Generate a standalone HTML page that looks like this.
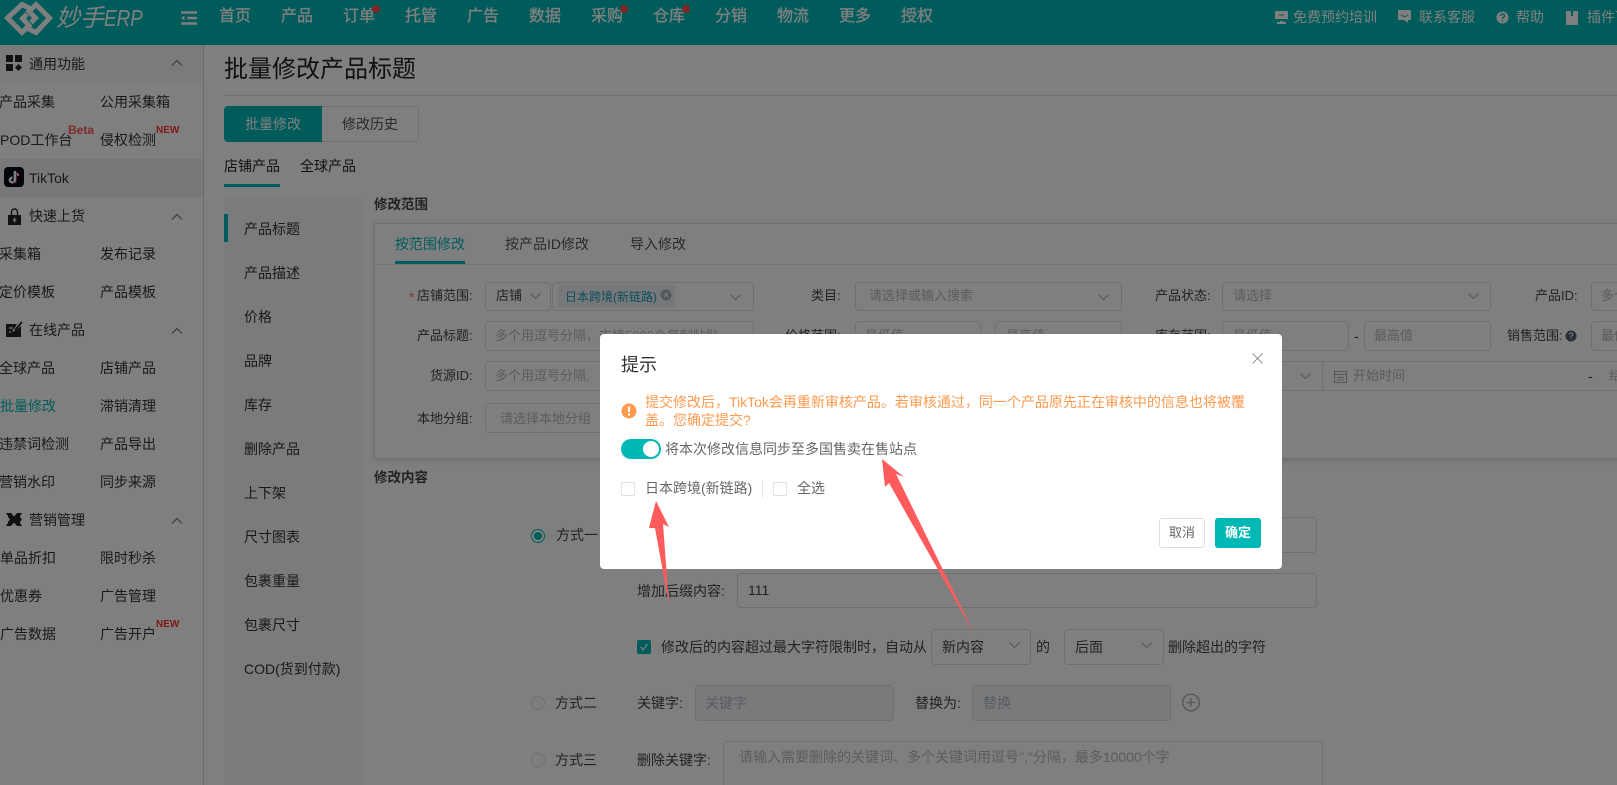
<!DOCTYPE html>
<html lang="zh"><head><meta charset="utf-8"><title>批量修改产品标题</title>
<style>
*{box-sizing:border-box}
html,body{margin:0;padding:0;width:1617px;height:785px;overflow:hidden;background:#fff;font-family:"Liberation Sans","Noto Sans CJK SC",sans-serif;font-size:14px;color:#333}
#root{position:relative;width:1617px;height:785px;overflow:hidden}
.a,.t,.b{position:absolute}
.t{line-height:20px;height:20px;white-space:nowrap}
.b{border:1px solid #dcdfe6;border-radius:4px;background:#fff}
.n{color:#fff;font-size:16px;top:7px;-webkit-text-stroke:.3px #fff}
.r{color:#fff;top:7px;font-size:14px}
.dot{position:absolute;width:8px;height:8px;border-radius:50%;background:#ff4d4f;top:5px}
.ph{color:#b4b8bf}
.f{font-size:13px}
.lab{color:#444}
.side{color:#333}
svg{position:absolute;overflow:visible}
#ov{position:absolute;left:0;top:0;width:1617px;height:785px;background:rgba(0,0,0,.5)}
#dlg{position:absolute;left:600px;top:334px;width:682px;height:235px;background:#fff;border-radius:4px}
#dlg .t{color:#666}
.cb{position:absolute;width:14px;height:14px;border:1px solid #dcdfe6;border-radius:2px;background:#fff}
</style></head><body><div id="root">
<div class="a" style="left:0;top:0;width:1617px;height:45px;background:#00b8b6"></div>
<svg style="left:0;top:0" width="60" height="45" viewBox="0 0 60 45"><g fill="none" stroke="#fff" stroke-width="5" stroke-linejoin="miter"><path d="M31 9L22 4.500L7.500 18L22 32.500L29 25.500L22.500 18.500L27 14"/><path d="M25 27L36 32.500L49.500 18L36 4.500L29 11.500L35.500 18L31 22.500"/></g></svg>
<div class="t" style="left:56px;top:4px;height:28px;line-height:28px;font-size:24px;font-style:italic;color:#fff">妙手<span style="display:inline-block;font-size:23px;transform:scaleX(.82);transform-origin:left">ERP</span></div>
<svg style="left:181px;top:11px" width="16" height="14"><path d="M0 1.500H16M6 7H16M0 12.500H16" stroke="#fff" stroke-width="2.400"/><path d="M0 7L3.500 4.500V9.500Z" fill="#fff"/></svg>
<div class="t n" style="left:219px">首页</div><div class="t n" style="left:281px">产品</div><div class="t n" style="left:343px">订单</div><div class="dot" style="left:372px"></div>
<div class="t n" style="left:405px">托管</div><div class="t n" style="left:467px">广告</div><div class="t n" style="left:529px">数据</div><div class="t n" style="left:591px">采购</div><div class="dot" style="left:620px"></div>
<div class="t n" style="left:653px">仓库</div><div class="dot" style="left:682px"></div><div class="t n" style="left:715px">分销</div><div class="t n" style="left:777px">物流</div><div class="t n" style="left:839px">更多</div><div class="t n" style="left:901px">授权</div>
<svg style="left:1275px;top:11px" width="14" height="14"><path d="M0 0H13V8H0Z M5 10H8V11H11V13H2V11H5Z" fill="#fff"/><path d="M4 4H9" stroke="#00b8b6"/></svg>
<div class="t r" style="left:1293px">免费预约培训</div>
<svg style="left:1397px;top:10px" width="15" height="15"><path d="M1 0H14V10H11V13L7 10H1Z" fill="#fff"/><path d="M4 5Q7.500 8 11 5" stroke="#00b8b6" fill="none"/></svg>
<div class="t r" style="left:1419px">联系客服</div>
<svg style="left:1496px;top:11px" width="13" height="13"><circle cx="6.500" cy="6.500" r="6" fill="#fff"/><path d="M4.500 5Q5 3 6.500 3Q8.500 3 8.500 5Q8.500 6 6.500 7V8M6.500 9.300V10.500" stroke="#00b8b6" fill="none" stroke-width="1.300"/></svg>
<div class="t r" style="left:1516px">帮助</div>
<svg style="left:1566px;top:11px" width="12" height="14"><path d="M0 0H12V14H0Z" fill="#fff"/><path d="M5 0V5H7V0" fill="#00b8b6"/></svg>
<div class="t r" style="left:1587px">插件下载</div>

<!-- sidebar -->
<div class="a" style="left:0;top:45px;width:204px;height:740px;background:#fff;border-right:1px solid #d4d6d9"></div>
<div class="a" style="left:0;top:45px;width:203px;height:38px;background:#f6f7f8"></div>
<div class="a" style="left:0;top:159px;width:203px;height:38px;background:#eef0f3"></div>
<svg style="left:6px;top:55px" width="17" height="17"><path d="M0 0H7V7H0ZM9 0H16V7H9ZM0 9H7V16H0Z" fill="#222"/><path d="M12.500 9L16 12.500L12.500 16L9 12.500Z" fill="#222"/></svg>
<div class="t side" style="left:29px;top:54px">通用功能</div>
<div class="t side" style="left:-1px;top:92px">产品采集</div><div class="t side" style="left:100px;top:92px">公用采集箱</div>
<div class="t side" style="left:0;top:130px">POD工作台</div><div class="t side" style="left:100px;top:130px">侵权检测</div>
<div class="t" style="left:68px;top:120px;font-size:12px;font-weight:bold;color:#f55">Beta</div>
<div class="t" style="left:156px;top:121px;font-size:10px;font-weight:bold;color:#f33">NEW</div>
<svg style="left:4px;top:167px" width="20" height="20"><rect width="20" height="20" rx="4" fill="#0c0c14"/><path d="M10 4.500V13A2.500 2.500 0 1 1 7.500 10.500" fill="none" stroke="#35d8dc" stroke-width="1"/><path d="M11 4V13A2.500 2.500 0 1 1 8.500 10.500" fill="none" stroke="#fff" stroke-width="2.200"/><path d="M11 4.500Q12 7.500 15 8" fill="none" stroke="#fff" stroke-width="2"/><path d="M12.500 5V13.500A2.500 2.500 0 0 1 9 15.800" fill="none" stroke="#e8355a" stroke-width=".8"/></svg>
<div class="t side" style="left:29px;top:168px">TikTok</div>
<svg style="left:7px;top:208px" width="15" height="17"><path d="M4.500 7V4A3 3 0 0 1 10.500 4V7" fill="none" stroke="#222" stroke-width="1.400"/><path d="M1 7H14V17H1Z" fill="#222"/><path d="M8.500 8.500L5.500 12.500H7.500L6.500 15.500L9.800 11.500H7.800Z" fill="#fff"/></svg>
<div class="t side" style="left:29px;top:206px">快速上货</div>
<div class="t side" style="left:-1px;top:244px">采集箱</div><div class="t side" style="left:100px;top:244px">发布记录</div>
<div class="t side" style="left:-1px;top:282px">定价模板</div><div class="t side" style="left:100px;top:282px">产品模板</div>
<svg style="left:6px;top:321px" width="17" height="17"><path d="M0 3H11L8 8H7L6.500 11L10 9L15 5V16H0Z" fill="#222"/><path d="M3 7H7M3 11H5" stroke="#fff" stroke-width="1.200"/><path d="M9 9L16 1" stroke="#222" stroke-width="1.800"/></svg>
<div class="t side" style="left:29px;top:320px">在线产品</div>
<div class="t side" style="left:-1px;top:358px">全球产品</div><div class="t side" style="left:100px;top:358px">店铺产品</div>
<div class="t" style="left:0;top:396px;color:#00b8b6">批量修改</div><div class="t side" style="left:100px;top:396px">滞销清理</div>
<div class="t side" style="left:-1px;top:434px">违禁词检测</div><div class="t side" style="left:100px;top:434px">产品导出</div>
<div class="t side" style="left:-1px;top:472px">营销水印</div><div class="t side" style="left:100px;top:472px">同步来源</div>
<svg style="left:6px;top:513px" width="17" height="13"><path d="M0 0H5L8 3.500L11 0H16L14 3V4L16 6.500L14 9V10L16 13H11L8 9.500L5 13H0L2 10V9L4 6.500L2 4V3Z" fill="#222"/></svg>
<div class="t side" style="left:29px;top:510px">营销管理</div>
<div class="t side" style="left:0;top:548px">单品折扣</div><div class="t side" style="left:100px;top:548px">限时秒杀</div>
<div class="t side" style="left:0;top:586px">优惠券</div><div class="t side" style="left:100px;top:586px">广告管理</div>
<div class="t side" style="left:0;top:624px">广告数据</div><div class="t side" style="left:100px;top:624px">广告开户</div>
<div class="t" style="left:156px;top:615px;font-size:10px;font-weight:bold;color:#f33">NEW</div>
<svg style="left:172px;top:60px" width="10" height="6"><path d="M0 5.500L5 .5L10 5.500" fill="none" stroke="#666"/></svg>
<svg style="left:172px;top:214px" width="10" height="6"><path d="M0 5.500L5 .5L10 5.500" fill="none" stroke="#666"/></svg>
<svg style="left:172px;top:328px" width="10" height="6"><path d="M0 5.500L5 .5L10 5.500" fill="none" stroke="#666"/></svg>
<svg style="left:172px;top:518px" width="10" height="6"><path d="M0 5.500L5 .5L10 5.500" fill="none" stroke="#666"/></svg>

<!-- main header -->
<div class="t" style="left:224px;top:55px;height:30px;line-height:30px;font-size:24px;color:#222">批量修改产品标题</div>
<div class="a" style="left:224px;top:95px;width:1393px;height:1px;background:#dfe1e4"></div>
<div class="a" style="left:224px;top:106px;width:195px;height:36px;border:1px solid #dcdfe6;border-radius:4px"></div>
<div class="a" style="left:224px;top:106px;width:98px;height:36px;background:#00b8b6;border-radius:4px 0 0 4px"></div>
<div class="t" style="left:245px;top:114px;color:#fff">批量修改</div>
<div class="t" style="left:342px;top:114px;color:#555">修改历史</div>
<div class="t" style="left:224px;top:156px;color:#222">店铺产品</div><div class="t" style="left:300px;top:156px;color:#222">全球产品</div>
<div class="a" style="left:224px;top:184px;width:56px;height:3px;background:#00b8b6"></div>

<!-- left panel -->
<div class="a" style="left:224px;top:197px;width:140px;height:588px;background:#f4f6f8;border-radius:4px 4px 0 0"></div>
<div class="a" style="left:224px;top:214px;width:4px;height:28px;background:#00b8b6"></div>
<div class="t" style="left:244px;top:219px">产品标题</div><div class="t" style="left:244px;top:263px">产品描述</div><div class="t" style="left:244px;top:307px">价格</div><div class="t" style="left:244px;top:351px">品牌</div><div class="t" style="left:244px;top:395px">库存</div><div class="t" style="left:244px;top:439px">删除产品</div><div class="t" style="left:244px;top:483px">上下架</div><div class="t" style="left:244px;top:527px">尺寸图表</div><div class="t" style="left:244px;top:571px">包裹重量</div><div class="t" style="left:244px;top:615px">包裹尺寸</div><div class="t" style="left:244px;top:659px">COD(货到付款)</div>

<!-- range card -->
<div class="t" style="left:374px;top:195px;font-weight:bold;color:#444;font-size:13.500px">修改范围</div>
<div class="a" style="left:374px;top:223px;width:1260px;height:236px;border:1px solid #dfe1e5;background:#fff;box-shadow:0 2px 6px rgba(0,0,0,.12)"></div>
<div class="a" style="left:375px;top:264px;width:1242px;height:1px;background:#e4e7ed"></div>
<div class="t" style="left:395px;top:234px;color:#00b8b6">按范围修改</div><div class="t" style="left:505px;top:234px;color:#555">按产品ID修改</div><div class="t" style="left:630px;top:234px;color:#555">导入修改</div>
<div class="a" style="left:395px;top:261px;width:70px;height:3px;background:#00b8b6"></div>

<div class="t" style="left:409px;top:287px;color:#f56c6c">*</div><div class="t lab f" style="left:417px;top:286px">店铺范围:</div>
<div class="b" style="left:485px;top:282px;width:66px;height:29px"></div><div class="t lab f" style="left:496px;top:286px">店铺</div>
<svg style="left:530px;top:293px" width="11" height="6"><path d="M.5 .5L5.500 5.500L10.500 .5" fill="none" stroke="#aaa"/></svg>
<div class="b" style="left:552px;top:282px;width:202px;height:29px"></div>
<div class="a" style="left:558px;top:285px;width:117px;height:23px;background:#ecf0f4;border-radius:3px"></div>
<div class="t" style="left:565px;top:287px;font-size:12px;color:#1a9ab4">日本跨境(新链路)</div>
<svg style="left:660px;top:289px" width="12" height="12"><circle cx="6" cy="6" r="5.500" fill="#a9afb8"/><path d="M4 4L8 8M8 4L4 8" stroke="#fff"/></svg>
<svg style="left:730px;top:294px" width="11" height="6"><path d="M.5 .5L5.500 5.500L10.500 .5" fill="none" stroke="#aaa"/></svg>
<div class="t lab f" style="left:811px;top:286px">类目:</div>
<div class="b" style="left:855px;top:282px;width:267px;height:29px"></div><div class="t ph f" style="left:869px;top:286px">请选择或输入搜索</div>
<svg style="left:1098px;top:294px" width="11" height="6"><path d="M.5 .5L5.500 5.500L10.500 .5" fill="none" stroke="#aaa"/></svg>
<div class="t lab f" style="left:1155px;top:286px">产品状态:</div>
<div class="b" style="left:1222px;top:282px;width:269px;height:29px"></div><div class="t ph f" style="left:1233px;top:286px">请选择</div>
<svg style="left:1468px;top:293px" width="11" height="6"><path d="M.5 .5L5.500 5.500L10.500 .5" fill="none" stroke="#aaa"/></svg>
<div class="t lab f" style="left:1535px;top:286px">产品ID:</div>
<div class="b" style="left:1591px;top:282px;width:60px;height:29px"></div><div class="t ph f" style="left:1601px;top:286px">多个</div>

<div class="t lab f" style="left:417px;top:326px">产品标题:</div>
<div class="b" style="left:485px;top:321px;width:269px;height:30px"></div><div class="t ph f" style="left:495px;top:326px">多个用逗号分隔，支持5000个复制粘贴</div>
<div class="t lab f" style="left:785px;top:326px">价格范围:</div>
<div class="b" style="left:855px;top:321px;width:126px;height:30px"></div><div class="t ph f" style="left:865px;top:326px">最低值</div>
<div class="b" style="left:995px;top:321px;width:127px;height:30px"></div><div class="t ph f" style="left:1006px;top:326px">最高值</div>
<div class="t lab f" style="left:1155px;top:326px">库存范围:</div>
<div class="b" style="left:1222px;top:321px;width:127px;height:30px"></div><div class="t ph f" style="left:1233px;top:326px">最低值</div>
<div class="t" style="left:1354px;top:326px;color:#333">-</div>
<div class="b" style="left:1364px;top:321px;width:127px;height:30px"></div><div class="t ph f" style="left:1374px;top:326px">最高值</div>
<div class="t lab f" style="left:1507px;top:326px">销售范围:</div>
<svg style="left:1565px;top:330px" width="12" height="12"><circle cx="6" cy="6" r="5.500" fill="#555e6b"/><path d="M4.300 4.500Q4.500 3 6 3Q7.800 3 7.800 4.500Q7.800 5.500 6 6.300V7.200M6 8.200V9.300" stroke="#fff" fill="none"/></svg>
<div class="b" style="left:1591px;top:321px;width:60px;height:30px"></div><div class="t ph f" style="left:1601px;top:326px">最低</div>

<div class="t lab f" style="left:430px;top:366px">货源ID:</div>
<div class="b" style="left:485px;top:361px;width:269px;height:30px"></div><div class="t ph f" style="left:495px;top:366px;width:105px;overflow:hidden">多个用逗号分隔,</div>
<div class="a" style="left:1200px;top:361px;width:440px;height:30px;border:1px solid #dcdfe6;border-left:none"></div>
<div class="a" style="left:1322px;top:361px;width:1px;height:30px;background:#dcdfe6"></div>
<svg style="left:1300px;top:373px" width="11" height="6"><path d="M.5 .5L5.500 5.500L10.500 .5" fill="none" stroke="#aaa"/></svg>
<svg style="left:1334px;top:370px" width="13" height="13"><rect x=".5" y="1.500" width="12" height="11" fill="none" stroke="#aaa"/><path d="M.5 4.500H12.500M3 7.500H10M3 10H10" stroke="#aaa"/></svg>
<div class="t ph f" style="left:1353px;top:366px">开始时间</div>
<div class="t" style="left:1588px;top:366px">-</div><div class="t ph f" style="left:1609px;top:366px">结束</div>

<div class="t lab f" style="left:417px;top:409px">本地分组:</div>
<div class="b" style="left:485px;top:403px;width:269px;height:30px"></div><div class="t ph f" style="left:500px;top:409px">请选择本地分组</div>

<!-- content -->
<div class="t" style="left:374px;top:468px;font-weight:bold;color:#444;font-size:13.500px">修改内容</div>
<div class="a" style="left:531px;top:529px;width:14px;height:14px;border-radius:50%;border:1px solid #00b8b6;background:#fff"></div>
<div class="a" style="left:534px;top:532px;width:8px;height:8px;border-radius:50%;background:#00b8b6"></div>
<div class="t lab" style="left:556px;top:525px">方式一</div>
<div class="b" style="left:737px;top:517px;width:580px;height:36px"></div>
<div class="t lab" style="left:637px;top:581px">增加后缀内容:</div>
<div class="b" style="left:737px;top:573px;width:580px;height:35px"></div><div class="t lab" style="left:748px;top:580px">111</div>
<div class="a" style="left:637px;top:640px;width:14px;height:14px;background:#00b8b6;border-radius:2px"></div>
<svg style="left:637px;top:640px" width="14" height="14"><path d="M3.500 7L6 10L10.500 4" fill="none" stroke="#fff" stroke-width="1.300"/></svg>
<div class="t lab" style="left:661px;top:637px">修改后的内容超过最大字符限制时，自动从</div>
<div class="b" style="left:931px;top:629px;width:100px;height:36px"></div><div class="t lab" style="left:942px;top:637px">新内容</div>
<svg style="left:1009px;top:642px" width="11" height="6"><path d="M.5 .5L5.500 5.500L10.500 .5" fill="none" stroke="#aaa"/></svg>
<div class="t lab" style="left:1036px;top:637px">的</div>
<div class="b" style="left:1064px;top:629px;width:100px;height:36px"></div><div class="t lab" style="left:1075px;top:637px">后面</div>
<svg style="left:1141px;top:642px" width="11" height="6"><path d="M.5 .5L5.500 5.500L10.500 .5" fill="none" stroke="#aaa"/></svg>
<div class="t lab" style="left:1168px;top:637px">删除超出的字符</div>

<div class="a" style="left:531px;top:696px;width:14px;height:14px;border-radius:50%;border:1px solid #dcdfe6;background:#fff"></div>
<div class="t lab" style="left:555px;top:693px">方式二</div>
<div class="t lab" style="left:637px;top:693px">关键字:</div>
<div class="b" style="left:695px;top:685px;width:199px;height:36px;background:#f2f4f7"></div><div class="t ph" style="left:705px;top:693px">关键字</div>
<div class="t lab" style="left:915px;top:693px">替换为:</div>
<div class="b" style="left:972px;top:685px;width:199px;height:36px;background:#f2f4f7"></div><div class="t ph" style="left:983px;top:693px">替换</div>
<svg style="left:1182px;top:693px" width="18" height="20"><circle cx="9" cy="9.500" r="8.300" fill="none" stroke="#aaa" stroke-width="1.300"/><path d="M9 5V14M4.500 9.500H13.500" stroke="#aaa" stroke-width="1.300"/></svg>
<div class="a" style="left:531px;top:753px;width:14px;height:14px;border-radius:50%;border:1px solid #dcdfe6;background:#fff"></div>
<div class="t lab" style="left:555px;top:750px">方式三</div>
<div class="t lab" style="left:637px;top:750px">删除关键字:</div>
<div class="b" style="left:723px;top:741px;width:600px;height:44px;border-bottom:none;border-radius:4px 4px 0 0"></div><div class="t ph" style="left:739px;top:747px">请输入需要删除的关键词、多个关键词用逗号","分隔，最多10000个字</div>

<div id="ov"></div>

<div id="dlg">
<div class="t" style="left:21px;top:20px;height:22px;line-height:22px;font-size:18px;color:#333!important">提示</div>
<svg style="left:652px;top:19px" width="11" height="11"><path d="M.5 .5L10.500 10.500M10.500 .5L.5 10.500" stroke="#909399"/></svg>
<svg style="left:21px;top:69px" width="16" height="16"><circle cx="8" cy="8" r="7.500" fill="#ff9a4f"/><path d="M8 3.500V9" stroke="#fff" stroke-width="2"/><circle cx="8" cy="11.500" r="1.200" fill="#fff"/></svg>
<div class="t" style="left:45px;top:58px;color:#ff9a4f!important">提交修改后，TikTok会再重新审核产品。若审核通过，同一个产品原先正在审核中的信息也将被覆</div>
<div class="t" style="left:45px;top:76px;color:#ff9a4f!important">盖。您确定提交?</div>
<div class="a" style="left:21px;top:105px;width:40px;height:20px;background:#00b8b6;border-radius:10px"></div>
<div class="a" style="left:43px;top:107px;width:16px;height:16px;background:#fff;border-radius:50%"></div>
<div class="t" style="left:65px;top:105px">将本次修改信息同步至多国售卖在售站点</div>
<div class="cb" style="left:21px;top:148px"></div>
<div class="t" style="left:45px;top:144px">日本跨境(新链路)</div>
<div class="a" style="left:162px;top:145px;width:1px;height:19px;background:#e4e7ed"></div>
<div class="cb" style="left:173px;top:148px"></div>
<div class="t" style="left:197px;top:144px">全选</div>
<div class="a" style="left:559px;top:184px;width:46px;height:30px;border:1px solid #dcdfe6;border-radius:3px;background:#fff"></div>
<div class="t" style="left:569px;top:189px;font-size:13px">取消</div>
<div class="a" style="left:615px;top:184px;width:46px;height:30px;background:#00b8b6;border-radius:3px"></div>
<div class="t" style="left:625px;top:189px;font-size:13px;font-weight:bold;color:#fff!important">确定</div>
</div>

<svg style="left:0;top:0" width="1617" height="785"><path d="M656 501L669 527L663 524L669 605L655 528L649 528Z" fill="#ff5a5c"/><path d="M882 459L904 477L896 474L975 635L889 483L885 487Z" fill="#ff5a5c"/></svg>
</div></body></html>
